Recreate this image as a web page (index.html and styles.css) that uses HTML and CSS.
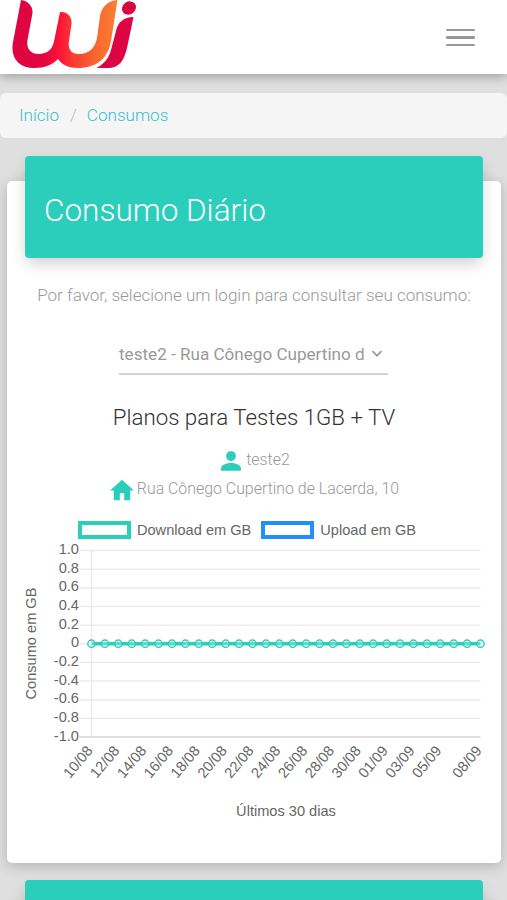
FILE: index.html
```html
<!DOCTYPE html>
<html lang="pt-br">
<head>
    <meta charset="UTF-8">
    <meta name="viewport" content="width=device-width, initial-scale=1.0">
    <title>Consumos</title>
    <link rel="stylesheet" href="styles.css">
</head>
<body>
    <header class="navbar">
        <a href="#" class="logo">
            <svg width="126" height="70" viewBox="0 0 126 70">
                <defs>
                    <linearGradient id="logo-w" x1="0" y1="0" x2="1" y2="0">
                        <stop offset="0" stop-color="#dc0442"></stop>
                        <stop offset="0.3" stop-color="#e3063f"></stop>
                        <stop offset="0.44" stop-color="#fb1237"></stop>
                        <stop offset="0.58" stop-color="#fb3b33"></stop>
                        <stop offset="0.8" stop-color="#fa6830"></stop>
                        <stop offset="1" stop-color="#fb8032"></stop>
                    </linearGradient>
                </defs>
                <path fill="url(#logo-w)" d="M9 0C16 1 21 6 20.500 13L15.500 40C14 49 19 54 26 54C36 54 41 49 42.500 39L48 12C55 11 60.500 17 59.500 24L57 41C55.500 50 60 54 67 54C77 54 83 48 85 38L88 16C90 6 96 1 105.500 0L99 41C96 59 84 68 66 68C57 68 50 65 46 59C40 65 33 68 22 68C7 68 -2 58 1 42Z"></path>
                <path fill="#dc0442" d="M121.500 17L115 48C112 61 107 68 96 68H84.500C94 63 98 56 100 46L104 31C106 22 112 17 121.500 17Z"></path>
                <ellipse fill="#dc0442" cx="117" cy="8" rx="7.300" ry="6.300" transform="rotate(-35 117 8)"></ellipse>
            </svg>
        </a>
        <button class="menu-btn" aria-label="Menu">
            <span></span>
            <span></span>
            <span></span>
        </button>
    </header>

    <nav class="breadcrumb">
        <a href="#">Início</a>
        <span class="separator">/</span>
        <a href="#">Consumos</a>
    </nav>

    <div class="card">
        <div class="card-header">
            <h1>Consumo Diário</h1>
        </div>
        <div class="card-content">
            <p class="help">Por favor, selecione um login para consultar seu consumo:</p>
            <div class="select">
                <span class="select-text">teste2 - Rua Cônego Cupertino d</span>
                <svg width="12" height="8" viewBox="0 0 12 8"><path d="M1.500 1.200L6 5.700L10.500 1.200" fill="none" stroke="#999" stroke-width="1.700"></path></svg>
            </div>
            <h2>Planos para Testes 1GB + TV</h2>
            <p class="info">
                <svg width="26" height="26" viewBox="0 0 24 24"><path d="M12 12c2.500 0 4.500-2.100 4.500-4.600S14.500 3 12 3 7.500 4.900 7.500 7.400 9.500 12 12 12zm0 1.800c-3.200 0-9.200 1.500-9.200 4.700V21h18.400v-2.500c0-3.200-6-4.700-9.200-4.700z"></path></svg>
                <span>teste2</span>
            </p>
            <p class="info">
                <svg width="26" height="26" viewBox="0 0 24 24"><path d="M10 21.500v-6.500h4v6.500h5.600v-9H23L12 2.500 1 12.500h3.400v9z"></path></svg>
                <span>Rua Cônego Cupertino de Lacerda, 10</span>
            </p>
            <div class="legend">
                <span class="legend-item"><i class="box download"></i>Download em GB</span>
                <span class="legend-item"><i class="box upload"></i>Upload em GB</span>
            </div>
            <svg class="chart" id="chart" width="494" height="284" viewBox="0 0 494 284"></svg>
        </div>
    </div>

    <div class="card next">
        <div class="card-header"></div>
    </div>

    <script src="script.js"></script>
</body>
</html>
```
FILE: styles.css
```css
* {
    box-sizing: border-box;
}

body {
    margin: 0;
    height: 900px;
    overflow: hidden;
    background: #dfdfdf;
    font-family: Roboto, "Liberation Sans", sans-serif;
    font-weight: 300;
    color: #999;
}

.navbar {
    display: flex;
    justify-content: space-between;
    align-items: flex-start;
    height: 74px;
    padding: 0 32px 0 12px;
    background: #fff;
    box-shadow: 0 3px 10px rgba(0, 0, 0, 0.28);
}

.logo svg {
    display: block;
}

.menu-btn {
    display: flex;
    flex-direction: column;
    gap: 5px;
    margin-top: 29px;
    padding: 0;
    border: 0;
    background: none;
}

.menu-btn span {
    width: 29px;
    height: 2.400px;
    border-radius: 1px;
    background: #999;
}

.breadcrumb {
    display: flex;
    align-items: center;
    height: 45px;
    margin-top: 19px;
    padding: 0 19px 2px;
    border-radius: 6px;
    background: #f5f5f5;
    font-size: 17.100px;
}

.breadcrumb a {
    color: #35bfd2;
    text-decoration: none;
}

.separator {
    margin: 0 10px 0 11px;
    color: #bbb;
}

.card {
    height: 682px;
    margin: 43px 6px 0 7px;
    border-radius: 5px;
    background: #fff;
    box-shadow: 0 3px 14px rgba(0, 0, 0, 0.2);
}

.card-header {
    position: relative;
    top: -25px;
    display: flex;
    align-items: center;
    height: 102px;
    margin: 0 18.500px 0 18px;
    padding: 6px 19px 0;
    border-radius: 4px;
    background: #2bcdbb;
    box-shadow: 0 7px 16px -2px rgba(0, 0, 0, 0.2);
}

h1 {
    margin: 0;
    color: #fff;
    font-size: 31.500px;
    font-weight: 300;
}

.card-content {
    display: flex;
    flex-direction: column;
    align-items: center;
}

.help {
    margin: 0;
    font-size: 17.050px;
    line-height: 24px;
}

.select {
    display: flex;
    align-items: center;
    width: 269px;
    height: 41px;
    margin: 27px 1px 0 0;
    border-bottom: 2px solid #d2d2d2;
    font-size: 17.100px;
    font-weight: 400;
}

.select-text {
    width: 248px;
    white-space: nowrap;
}

.select svg {
    margin-left: 4px;
}

h2 {
    margin: 26px 0 13px;
    color: #333;
    font-size: 22.300px;
    font-weight: 300;
    line-height: 32px;
}

.info {
    display: flex;
    align-items: center;
    height: 29px;
    margin: 0;
    gap: 2px;
    font-size: 15.900px;
}

.info span {
    padding-bottom: 2px;
}

.info svg {
    fill: #2bcdbb;
}

.legend {
    display: flex;
    gap: 10px;
    height: 20px;
    margin: 16px 14px 0 0;
    align-items: center;
    color: #666;
    font-family: "Liberation Sans", Arial, sans-serif;
    font-size: 14.600px;
    font-weight: 400;
}

.legend-item {
    display: flex;
    align-items: center;
    gap: 6px;
}

.box {
    width: 53px;
    height: 18px;
    border: 4px solid #2bcdbb;
}

.box.upload {
    border-color: #2090f5;
}

.chart {
    display: block;
    fill: #666;
    font-family: "Liberation Sans", Arial, sans-serif;
    font-size: 14.600px;
    font-weight: 400;
}

.grid {
    stroke: #ebebeb;
    stroke-width: 1.400;
}

.grid.axis {
    stroke: #d3d3d3;
}

.line {
    stroke: #2bcdbb;
    stroke-width: 3.500;
}

.point {
    fill: rgba(255, 255, 255, 0.25);
    stroke: #2bcdbb;
    stroke-width: 1.400;
}

.next {
    margin-top: 42px;
}
```
FILE: script.js
```js
const chart = document.getElementById('chart');
const left = 84.500;
const right = 473.500;
const top0 = 10.500;
const bottom = 197;
const days = 30;
const step = (right - left) / (days - 1);

function add(tag, attrs, text) {
    const el = document.createElementNS('http://www.w3.org/2000/svg', tag);
    for (const name in attrs) {
        el.setAttribute(name, attrs[name]);
    }
    if (text) {
        el.textContent = text;
    }
    chart.appendChild(el);
}

// eixo Y
const ticks = ['1.0', '0.8', '0.6', '0.4', '0.2', '0', '-0.2', '-0.4', '-0.6', '-0.8', '-1.0'];
ticks.forEach((tick, i) => {
    const y = top0 + i * (bottom - top0) / 10;
    add('line', { class: i === 10 ? 'grid axis' : 'grid', x1: left - 12, x2: right, y1: y, y2: y });
    add('text', { x: 72, y: y + 3.500, 'text-anchor': 'end' }, tick);
});
add('line', { class: 'grid', x1: left, x2: left, y1: top0, y2: bottom });

// eixo X, um rótulo a cada dois dias e o último dia
for (let i = 0; i < days; i++) {
    if ((i % 2 === 0 && i < 27) || i === days - 1) {
        const date = new Date(2021, 7, 10 + i);
        const label = String(date.getDate()).padStart(2, '0') + '/' + String(date.getMonth() + 1).padStart(2, '0');
        const x = left + i * step;
        add('text', { transform: `translate(${x + 2} 211) rotate(-50)`, 'text-anchor': 'end' }, label);
    }
}

// consumo
const zero = (top0 + bottom) / 2;
add('line', { class: 'line', x1: left, x2: right, y1: zero, y2: zero });
for (let i = 0; i < days; i++) {
    add('circle', { class: 'point', cx: left + i * step, cy: zero, r: 3.700 });
}

add('text', { x: 279, y: 276, 'text-anchor': 'middle' }, 'Últimos 30 dias');
add('text', { transform: 'translate(29 103.500) rotate(-90)', 'text-anchor': 'middle' }, 'Consumo em GB');
```
